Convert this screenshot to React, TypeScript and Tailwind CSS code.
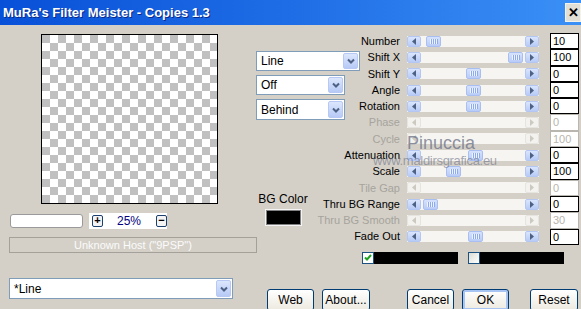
import React from 'react'

type Row = { label: string; value: string; thumb: number | null; off?: boolean }

const rows: Row[] = [
  { label: 'Number', value: '10', thumb: 19 },
  { label: 'Shift X', value: '100', thumb: 101 },
  { label: 'Shift Y', value: '0', thumb: 59 },
  { label: 'Angle', value: '0', thumb: 59 },
  { label: 'Rotation', value: '0', thumb: 59 },
  { label: 'Phase', value: '0', thumb: null, off: true },
  { label: 'Cycle', value: '100', thumb: null, off: true },
  { label: 'Attenuation', value: '0', thumb: 61 },
  { label: 'Scale', value: '100', thumb: 39 },
  { label: 'Tile Gap', value: '0', thumb: null, off: true },
  { label: 'Thru BG Range', value: '0', thumb: 16 },
  { label: 'Thru BG Smooth', value: '30', thumb: null, off: true },
  { label: 'Fade Out', value: '0', thumb: 61 },
]

function Arrow({ dir, off }: { dir: 'l' | 'r'; off?: boolean }) {
  return (
    <div
      className={`w-[14px] h-full shrink-0 rounded-[2px] border flex items-center justify-center ${
        off ? 'border-[#e6e4de] bg-[#f3f2ee]' : 'border-[#b4c7f2] bg-gradient-to-b from-[#dae5fd] to-[#b8cbf6]'
      }`}
    >
      <svg width="4" height="7" viewBox="0 0 4 7">
        <polygon points={dir === 'l' ? '4,0 0,3.5 4,7' : '0,0 4,3.5 0,7'} fill={off ? '#cbc9c0' : '#4d6185'} />
      </svg>
    </div>
  )
}

function Thumb() {
  return (
    <div className="w-[15px] h-full shrink-0 rounded-[2px] border border-[#a9bff2] bg-gradient-to-b from-[#d6e2fd] to-[#b9ccf7] flex items-center justify-center">
      <svg width="8" height="5" viewBox="0 0 8 5">
        {[0, 2, 4, 6].map(x => (
          <g key={x}>
            <rect x={x} y="0" width="1" height="5" fill="#eef3fe" />
            <rect x={x + 1} y="0" width="1" height="5" fill="#8caaf0" />
          </g>
        ))}
      </svg>
    </div>
  )
}

function Scroll({ thumb, off }: { thumb: number | null; off?: boolean }) {
  return (
    <div className="w-[132px] h-[11px] ml-[7px] flex bg-[#f6f5f1]">
      <Arrow dir="l" off={off} />
      <div className="flex-1 flex">
        {thumb !== null && (
          <>
            <div style={{ width: thumb - 14 }} />
            <Thumb />
          </>
        )}
      </div>
      <Arrow dir="r" off={off} />
    </div>
  )
}

function Chevron() {
  return (
    <div className="w-[15px] h-[calc(100%-2px)] mr-[1px] rounded-[2px] border border-[#b6c8f3] bg-gradient-to-b from-[#dce6fd] to-[#b7caf6] flex items-center justify-center">
      <svg width="8" height="6" viewBox="0 0 8 6">
        <polyline points="1,1.5 4,4.5 7,1.5" fill="none" stroke="#4d6185" strokeWidth="2" />
      </svg>
    </div>
  )
}

function Combo({ text, className }: { text: string; className: string }) {
  return (
    <div className={`border border-[#7f9db9] bg-white flex items-center ${className}`}>
      <span className="flex-1 pl-[4px] text-[12px] text-black">{text}</span>
      <Chevron />
    </div>
  )
}

function Btn({ text, className, focus }: { text: string; className: string; focus?: boolean }) {
  return (
    <div
      className={`h-[22px] shrink-0 rounded-[3px] border border-[#003c74] bg-gradient-to-b from-white to-[#ece9df] flex items-center justify-center text-[12px] text-black ${
        focus ? 'shadow-[inset_0_0_0_2px_#a8c4f2]' : ''
      } ${className}`}
    >
      {text}
    </div>
  )
}

export default function App() {
  return (
    <div className="relative w-[581px] h-[309px] overflow-hidden bg-[#d4d0c8] font-['Liberation_Sans',Arial,sans-serif]">
      {/* Title bar */}
      <div className="h-[25px] flex items-center justify-between bg-gradient-to-r from-[#0850d8] via-[#1f6de6] to-[#3b90f6]">
        <span className="pl-[3px] text-[13px] font-bold text-white font-['Liberation_Sans_Narrow','Liberation_Sans',sans-serif] [text-shadow:1px_1px_0_#0a2a8a]">
          MuRa's Filter Meister - Copies 1.3
        </span>
        <div className="w-[16px] h-[19px] bg-[#e2dfd6] border border-[#f4f2ec] flex items-center justify-center text-[13px] font-bold text-black">
          ✕
        </div>
      </div>

      <div className="flex">
        {/* Left: preview */}
        <div className="w-[256px] shrink-0 flex flex-col">
          <div className="ml-[41px] mt-[9px] w-[177px] h-[170px] border border-black bg-[conic-gradient(#fff_25%,#c0c0c0_0_50%,#fff_0_75%,#c0c0c0_0)] bg-[length:16px_16px]" />
          <div className="mt-[9px] h-[15px] flex items-center">
            <div className="ml-[10px] w-[73px] h-[14px] rounded-[3px] border border-[#9a9a9a] bg-white" />
            <div className="ml-[6px] w-[78px] h-[16px] bg-white flex items-center">
              <div className="ml-[3px] w-[12px] h-[12px] rounded-[2px] border border-[#1c3f6e] bg-[#f4f4f4] flex items-center justify-center text-[11px] font-bold leading-none text-black">
                +
              </div>
              <span className="ml-[14px] text-[12px] text-[#000080]">25%</span>
              <div className="ml-[15px] w-[12px] h-[12px] rounded-[2px] border border-[#1c3f6e] bg-[#f4f4f4] flex items-center justify-center text-[11px] font-bold leading-none text-black">
                −
              </div>
            </div>
          </div>
          <div className="ml-[9px] mt-[9px] w-[248px] h-[16px] border border-[#a4a09a] flex items-center justify-center text-[11px] text-[#fbfbfb]">
            Unknown Host ("9PSP")
          </div>
          <Combo text="*Line" className="ml-[9px] mt-[25px] w-[224px] h-[21px]" />
        </div>

        {/* Right */}
        <div className="flex-1 flex flex-col">
          <div className="flex">
            <div className="w-[54px] shrink-0 flex flex-col">
              <Combo text="Line" className="mt-[26px] w-[104px] h-[20px] shrink-0" />
              <Combo text="Off" className="mt-[4px] w-[89px] h-[20px] shrink-0" />
              <Combo text="Behind" className="mt-[4px] w-[89px] h-[21px] shrink-0" />
              <div className="mt-[72px] h-[14px] text-center text-[12px] leading-[14px] text-black whitespace-nowrap">BG Color</div>
              <div className="mx-auto mt-[4px] w-[35px] h-[15px] bg-black border border-[#808080] shadow-[0_0_0_1px_#f4f4f4]" />
            </div>
            <div className="flex-1 pt-[8px] flex flex-col">
              {rows.map(r => (
                <div key={r.label} className="h-[16.3px] flex items-center">
                  <div className={`w-[90px] text-right text-[11px] whitespace-nowrap ${r.off ? 'text-[#a6a49c]' : 'text-black'}`}>
                    {r.label}
                  </div>
                  <Scroll thumb={r.thumb} off={r.off} />
                  <div
                    className={`ml-[11px] w-[29px] h-full border bg-white pl-[2px] text-[11px] leading-[14px] ${
                      r.off ? 'border-[#b8b6ae] text-[#b8b6ae]' : 'border-black text-black'
                    }`}
                  >
                    {r.value}
                  </div>
                </div>
              ))}
            </div>
          </div>

          <div className="mt-[7px] h-[12px] pl-[106px] flex">
            <div className="w-[12px] h-[12px] border border-[#1c5180] bg-white flex items-center justify-center">
              <svg width="8" height="7" viewBox="0 0 8 7">
                <polyline points="1,3.5 3,5.5 7,1" fill="none" stroke="#21a121" strokeWidth="2" />
              </svg>
            </div>
            <div className="w-[84px] h-[12px] bg-black" />
            <div className="ml-[10px] w-[12px] h-[12px] border border-[#1c5180] bg-gradient-to-br from-[#dcdcd5] to-white" />
            <div className="w-[84px] h-[12px] bg-black" />
          </div>

          <div className="mt-[25px] flex">
            <Btn text="Web" className="ml-[11px] w-[47px]" />
            <Btn text="About..." className="ml-[8px] w-[48px]" />
            <Btn text="Cancel" className="ml-[37px] w-[47px]" />
            <Btn text="OK" className="ml-[8px] w-[47px]" focus />
            <Btn text="Reset" className="ml-[21px] w-[48px]" />
          </div>
        </div>
      </div>

      {/* watermark */}
      <span className="absolute left-[407px] top-[130px] text-[18px] text-[#6c7086]/75">Pinuccia</span>
      <span className="absolute left-[373px] top-[151px] text-[13px] tracking-[-0.3px] text-[#6c7086]/60">www.maldirsgrafica.eu</span>
    </div>
  )
}
